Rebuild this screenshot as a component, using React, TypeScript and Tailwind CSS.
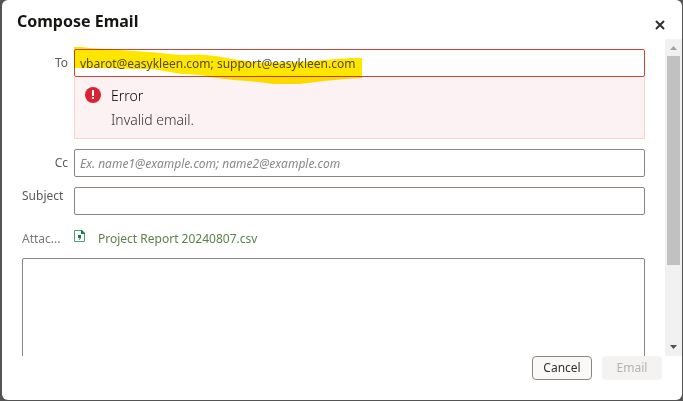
import React, { useState } from 'react';

const labelClass = 'w-[46px] shrink-0 text-[12px] leading-4 text-[#5c5957]';
const inputClass =
  'block h-[28px] w-full rounded-[2px] border bg-white px-[5px] text-[12px] text-[#55524f] outline-none placeholder:italic placeholder:text-[#8b8886]';

function ErrorIcon() {
  return (
    <svg viewBox="0 0 16 16" className="h-4 w-4 shrink-0" aria-hidden="true">
      <circle cx="8" cy="8" r="8" fill="#dc2334" />
      <path d="M7 3h2v6H7z" fill="#fff" />
      <path d="M7 10h2v2H7z" fill="#fff" />
    </svg>
  );
}

function CsvIcon() {
  return (
    <svg viewBox="0 0 12 12" className="h-3 w-3 shrink-0" aria-hidden="true">
      <path d="M.5 .5h7l3 3v8H.5z" fill="#fff" stroke="#4f9f79" />
      <path d="M7 0h1l3 3v1H7z" fill="#1d7d4d" />
      <path d="M4 5h3v2.500c0 1.200-.8 2-2.200 2.400v-1c.6-.2.900-.5.900-.9H4z" fill="#1d7d4d" />
    </svg>
  );
}

function Highlight() {
  return (
    <svg
      viewBox="0 0 290 40"
      className="pointer-events-none absolute -top-[2px] left-0 h-10 w-[290px] mix-blend-multiply"
      aria-hidden="true"
    >
      <path
        d="M0 0L8 0L16 1L45 3L76 5L106 8L126 7.500L142 9L158 12L184 15.500L220 15.500L250 13L275 11L288 11V31L272 32L250 34L226 37L200 37L184 35L160 33L142 31L126 28L108 27L90 24L78 22L60 22L30 21L0 21Z"
        fill="#ffe600"
      />
    </svg>
  );
}

function Scrollbar() {
  return (
    <div className="flex w-[17px] shrink-0 flex-col items-center bg-[#f1f1f1]" aria-hidden="true">
      <svg viewBox="0 0 17 17" className="h-[17px] w-[17px] shrink-0">
        <path d="M5 11h7L8.500 7z" fill="#a3a3a3" />
      </svg>
      <div className="min-h-0 flex-1">
        <div className="h-[74%] w-[13px] bg-[#c1c1c1]" />
      </div>
      <svg viewBox="0 0 17 17" className="h-[17px] w-[17px] shrink-0">
        <path d="M5 6h7l-3.500 4z" fill="#505050" />
      </svg>
    </div>
  );
}

export default function App() {
  const [to, setTo] = useState('vbarot@easykleen.com; support@easykleen.com');
  const [cc, setCc] = useState('');
  const [subject, setSubject] = useState('');
  const [message, setMessage] = useState('');

  return (
    <div className="h-screen bg-[#545454] pr-px pb-px pl-[2px] font-['Noto_Sans','Open_Sans',sans-serif]">
      <div role="dialog" aria-labelledby="dialog-title" className="flex h-full flex-col overflow-hidden rounded-md bg-white">
        <header className="flex h-[39px] shrink-0 items-start justify-between pr-4 pl-[15px]">
          <h1 id="dialog-title" className="pt-[9px] text-[16px] leading-6 font-bold text-[#161513]">Compose Email</h1>
          <button type="button" aria-label="Close" className="mt-[19px] p-px">
            <svg viewBox="0 0 10 10" className="h-[10px] w-[10px]" aria-hidden="true">
              <path d="M1 1l8 8M9 1L1 9" stroke="#33302e" strokeWidth="2" />
            </svg>
          </button>
        </header>

        <div className="flex min-h-0 flex-1">
          <form id="compose" className="min-w-0 flex-1 overflow-hidden px-5 pt-[10px]">
            <div className="flex gap-[6px]">
              <label htmlFor="to" className={`${labelClass} pt-[6px] text-right`}>To</label>
              <div className="relative min-w-0 flex-1">
                <input
                  id="to"
                  value={to}
                  onChange={(e) => setTo(e.target.value)}
                  aria-invalid="true"
                  aria-describedby="to-error"
                  className={`${inputClass} border-[#c74634]`}
                />
                <Highlight />
                <div id="to-error" className="flex gap-[10px] border border-t-0 border-[#f8d3d5] bg-[#fcf2f3] px-[10px] pt-[7px] pb-[6px] text-[14px] leading-6 font-light">
                  <div className="pt-[3px]"><ErrorIcon /></div>
                  <div>
                    <p className="text-black">Error</p>
                    <p className="text-[#33302e]">Invalid email.</p>
                  </div>
                </div>
              </div>
            </div>

            <div className="mt-[10px] flex gap-[6px]">
              <label htmlFor="cc" className={`${labelClass} pt-[6px] text-right`}>Cc</label>
              <input
                id="cc"
                value={cc}
                onChange={(e) => setCc(e.target.value)}
                placeholder="Ex. name1@example.com; name2@example.com"
                className={`${inputClass} border-[#8b8580]`}
              />
            </div>

            <div className="mt-[10px] flex gap-[6px]">
              <label htmlFor="subject" className={`${labelClass} pt-px`}>Subject</label>
              <input
                id="subject"
                value={subject}
                onChange={(e) => setSubject(e.target.value)}
                className={`${inputClass} border-[#8b8580]`}
              />
            </div>

            <div className="mt-[15px] flex gap-[6px]">
              <span className="w-[46px] shrink-0 pt-px text-[12px] leading-4 text-[#7b7876]" title="Attachment">Attac...</span>
              <a href="#attachment" className="flex gap-3 text-[12px] leading-4 text-[#5a8248]">
                <CsvIcon />
                <span className="pt-px">Project Report 20240807.csv</span>
              </a>
            </div>

            <textarea
              aria-label="Message"
              value={message}
              onChange={(e) => setMessage(e.target.value)}
              className="mt-[11px] block h-48 w-full resize-none rounded-[2px] border border-[#8b8580] p-[5px] text-[12px] outline-none"
            />
          </form>
          <Scrollbar />
        </div>

        <footer className="flex shrink-0 justify-end gap-[10px] px-5 pb-5 text-[12px]">
          <button type="button" className="h-6 w-[60px] rounded-[4px] border border-[#8b8580] bg-[#fbf9f8] text-[#33302e]">
            Cancel
          </button>
          <button type="submit" form="compose" disabled className="h-6 w-[60px] rounded-[4px] bg-[#f4f3f2] text-[#b5b3b1]">
            Email
          </button>
        </footer>
      </div>
    </div>
  );
}
